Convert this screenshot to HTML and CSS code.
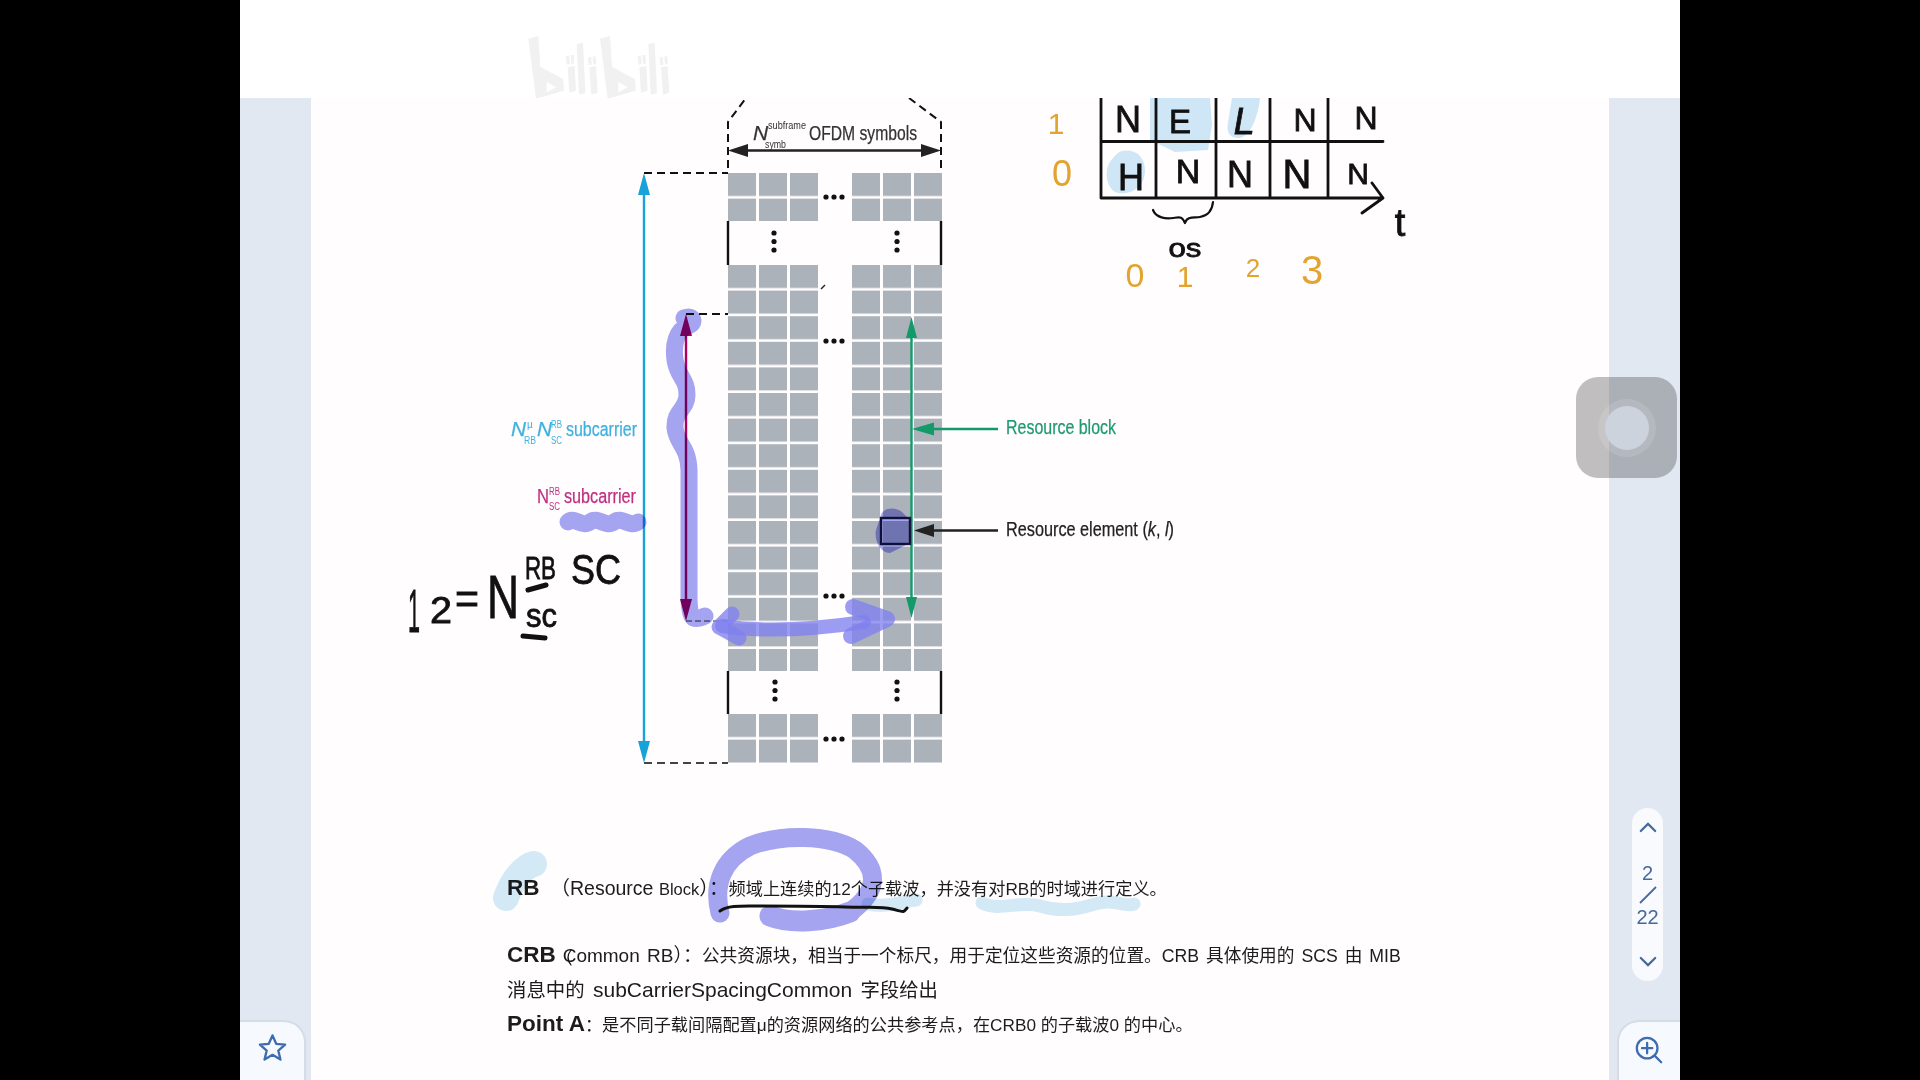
FILE: index.html
```html
<!DOCTYPE html>
<html lang="zh-CN">

<head>
  <meta charset="utf-8">
  <title>RB / CRB / Point A</title>
  <link rel="stylesheet" href="styles.css">
</head>

<body>
  <main class="app">
    <header class="topbar">
      <!-- bilibili watermark -->
      <svg class="watermark" viewBox="0 0 600 270" aria-label="bilibili">
        <g id="wm-bili">
          <path fill-rule="evenodd" d="M85 56 115 48 121 140 190 178 192 212 108 236ZM140 185 140 217 168 202Z" />
          <path d="M198 108 208 106 210 132 200 134ZM212 106 221 104 223 130 214 132ZM203 142 224 138 228 212 208 218Z" />
          <path d="M230 72 249 68 256 220 237 224Z" />
          <path d="M264 112 274 110 275 134 266 136ZM278 110 287 108 288 132 280 134ZM268 142 288 138 293 218 274 224Z" />
        </g>
        <use href="#wm-bili" x="215" />
      </svg>
    </header>

    <div class="main">
      <aside class="rail rail-left">
        <button type="button" class="corner corner-left" aria-label="收藏">
          <svg class="icon-star" viewBox="0 0 32 32">
            <path d="M16 3.5 19.8 12.2 29 13 22 19.2 24.2 28.5 16 23.6 7.8 28.5 10 19.2 3 13 12.2 12.2Z" />
          </svg>
        </button>
      </aside>

      <section class="doc">
        <svg class="figure" viewBox="311 98 1298 730">
          <defs>
            <pattern id="cell" width="31" height="25.6" patternUnits="userSpaceOnUse">
              <rect width="28" height="23" fill="#abb2b9" />
            </pattern>
          </defs>

          <!-- resource grid -->
          <g fill="url(#cell)">
            <g transform="translate(728 173)"><rect width="90" height="48" /></g>
            <g transform="translate(852 173)"><rect width="90" height="48" /></g>
            <g transform="translate(728 265)"><rect width="90" height="406" /></g>
            <g transform="translate(852 265)"><rect width="90" height="406" /></g>
            <g transform="translate(728 714)"><rect width="90" height="49" /></g>
            <g transform="translate(852 714)"><rect width="90" height="49" /></g>
          </g>

          <g class="bars">
            <path d="M728 221V265M941 221V265M728 671V714M941 671V714" />
          </g>

          <g class="dots">
            <circle cx="826" cy="197" r="2.6" /><circle cx="834" cy="197" r="2.6" /><circle cx="842" cy="197" r="2.6" />
            <circle cx="826" cy="341" r="2.6" /><circle cx="834" cy="341" r="2.6" /><circle cx="842" cy="341" r="2.6" />
            <circle cx="826" cy="596" r="2.6" /><circle cx="834" cy="596" r="2.6" /><circle cx="842" cy="596" r="2.6" />
            <circle cx="826" cy="739" r="2.6" /><circle cx="834" cy="739" r="2.6" /><circle cx="842" cy="739" r="2.6" />
            <circle cx="774" cy="233" r="2.6" /><circle cx="774" cy="241.5" r="2.6" /><circle cx="774" cy="250" r="2.6" />
            <circle cx="897" cy="233" r="2.6" /><circle cx="897" cy="241.5" r="2.6" /><circle cx="897" cy="250" r="2.6" />
            <circle cx="775" cy="682" r="2.6" /><circle cx="775" cy="690.5" r="2.6" /><circle cx="775" cy="699" r="2.6" />
            <circle cx="897" cy="682" r="2.6" /><circle cx="897" cy="690.5" r="2.6" /><circle cx="897" cy="699" r="2.6" />
          </g>

          <path class="dash" d="M644 173H728M686 314H728M728 168V122L746 98M909 98 941 122V168" />
          <path class="dash dash-grey" d="M644 763H728" />
          <path class="dash dash-thin" d="M686 621H728" />
          <path class="tick" d="M821 289 825 285" />

          <!-- arrows -->
          <g class="arrow-black">
            <path d="M745 150.5H925" />
            <path class="head" d="M728 150.5 748 144V157ZM941 150.5 921 144V157Z" />
            <path d="M930 530.5H998" />
            <path class="head" d="M914 530.5 934 524V537Z" />
          </g>
          <g class="arrow-blue">
            <path d="M644 190V748" />
            <path class="head" d="M644 173 650 195H638ZM644 763 650 741H638Z" />
          </g>
          <g class="arrow-magenta">
            <path d="M686 332V604" />
            <path class="head" d="M686 314 692 336H680ZM686 621 692 599H680Z" />
          </g>
          <g class="arrow-green">
            <path d="M911.5 335V600" />
            <path class="head" d="M911.5 317 917 338H906ZM911.5 618 917 597H906Z" />
            <path d="M930 429H998" />
            <path class="head" d="M912 429 934 422.5V435.5Z" />
          </g>
          <rect class="element" x="881" y="518" width="29" height="26" />

          <!-- labels -->
          <text class="label" x="809" y="140" textLength="108" lengthAdjust="spacingAndGlyphs">OFDM symbols</text>
          <text class="label label-n" x="753" y="140">N</text>
          <text class="label label-tiny" x="768" y="129" textLength="38" lengthAdjust="spacingAndGlyphs">subframe</text>
          <text class="label label-tiny" x="765" y="148" textLength="21" lengthAdjust="spacingAndGlyphs">symb</text>

          <g class="label-blue">
            <text class="label label-n" x="511" y="436" textLength="15" lengthAdjust="spacingAndGlyphs">N</text>
            <text class="label label-tiny" x="527" y="428">µ</text>
            <text class="label label-tiny" x="524" y="444" textLength="12" lengthAdjust="spacingAndGlyphs">RB</text>
            <text class="label label-n" x="537" y="436" textLength="15" lengthAdjust="spacingAndGlyphs">N</text>
            <text class="label label-tiny" x="551" y="428" textLength="11" lengthAdjust="spacingAndGlyphs">RB</text>
            <text class="label label-tiny" x="551" y="444" textLength="11" lengthAdjust="spacingAndGlyphs">SC</text>
            <text class="label" x="566" y="436" textLength="71" lengthAdjust="spacingAndGlyphs">subcarrier</text>
          </g>
          <g class="label-magenta">
            <text class="label" x="537" y="503" textLength="12" lengthAdjust="spacingAndGlyphs">N</text>
            <text class="label label-tiny" x="549" y="495" textLength="11" lengthAdjust="spacingAndGlyphs">RB</text>
            <text class="label label-tiny" x="549" y="510" textLength="11" lengthAdjust="spacingAndGlyphs">SC</text>
            <text class="label" x="564" y="503" textLength="72" lengthAdjust="spacingAndGlyphs">subcarrier</text>
          </g>
          <text class="label label-green" x="1006" y="434" textLength="110" lengthAdjust="spacingAndGlyphs">Resource block</text>
          <text class="label label-plain" x="1006" y="536" textLength="168" lengthAdjust="spacingAndGlyphs">Resource element (<tspan font-style="italic">k</tspan>, <tspan font-style="italic">l</tspan>)</text>

          <!-- handwritten formula -->
          <g class="hand">
            <text x="408" y="632" font-size="62" textLength="12" lengthAdjust="spacingAndGlyphs">1</text>
            <text x="430" y="623" font-size="36" textLength="22" lengthAdjust="spacingAndGlyphs">2</text>
            <text x="455" y="613" font-size="42" textLength="24" lengthAdjust="spacingAndGlyphs">=</text>
            <text x="487" y="618" font-size="62" textLength="32" lengthAdjust="spacingAndGlyphs">N</text>
            <text x="525" y="579" font-size="32" textLength="31" lengthAdjust="spacingAndGlyphs">RB</text>
            <text x="571" y="584" font-size="42" textLength="50" lengthAdjust="spacingAndGlyphs">SC</text>
            <text x="526" y="627" font-size="34" textLength="31" lengthAdjust="spacingAndGlyphs">sc</text>
          </g>
          <path class="pen-thick" d="M528 590 546 585M523 636 545 638" />

          <!-- handwritten table -->
          <path class="soft-blue" d="M1150 98H1210L1212 125 1208 150 1175 152 1150 140ZM1232 98H1260C1258 118 1250 136 1240 138 1230 138 1226 134 1228 122ZM1122 151C1136 148 1146 158 1145 172 1144 188 1130 195 1118 193 1106 190 1104 170 1110 162 1114 156 1118 152 1122 151Z" />
          <path class="pen" d="M1101 98V198M1156 98V198M1216 98V198M1270 98V198M1328 98V198M1101 141.5H1383M1101 198H1383M1372 183 1383 198 1362 213" />
          <path class="pen-thin" d="M1153 210C1156 218 1166 219 1173 218S1182 216 1185 223C1187 216 1194 218 1200 217S1212 212 1213 202" />
          <g class="hand hand-table">
            <text x="1128" y="132">N</text>
            <text x="1180" y="133" font-size="33">E</text>
            <text x="1242" y="134" font-size="38" transform="skewX(-10) translate(24 0)">L</text>
            <text x="1305" y="131" font-size="32">N</text>
            <text x="1366" y="129" font-size="32">N</text>
            <text x="1131" y="190">H</text>
            <text x="1188" y="183" font-size="34">N</text>
            <text x="1240" y="187">N</text>
            <text x="1297" y="188" font-size="40">N</text>
            <text x="1358" y="184" font-size="30">N</text>
            <text x="1400" y="236" font-size="38">t</text>
            <text x="1185" y="257" font-size="26" textLength="33" lengthAdjust="spacingAndGlyphs">os</text>
          </g>
          <g class="hand-orange">
            <text x="1056" y="134" font-size="30">1</text>
            <text x="1062" y="186" font-size="36">0</text>
            <text x="1135" y="287" font-size="34">0</text>
            <text x="1185" y="287" font-size="30">1</text>
            <text x="1253" y="277" font-size="26">2</text>
            <text x="1312" y="284" font-size="40">3</text>
          </g>
        </svg>

        <div class="notes">
          <p class="note-rb"><b>RB</b><span class="en">（Resource <small>Block</small>）：</span>频域上连续的12个子载波，并没有对RB的时域进行定义。</p>
          <p class="note-crb"><b>CRB</b> <span class="en-crb">Common RB）：</span>公共资源块，相当于一个标尺，用于定位这些资源的位置。CRB 具体使用的 SCS 由 MIB</p>
          <p class="note-msg">消息中的 <span class="en-msg">subCarrierSpacingCommon</span> 字段给出</p>
          <p class="note-point"><b>Point A</b>：是不同子载间隔配置μ的资源网络的公共参考点，在CRB0 的子载波0 的中心。</p>
        </div>

        <!-- pen marks lying over the figure and the notes -->
        <svg class="ink" viewBox="311 98 1298 982">
          <g class="hl-blue">
            <path d="M506 898C512 880 524 866 534 864" stroke-width="26" />
            <path d="M868 904C885 908 900 902 916 900M982 903C1000 912 1020 900 1040 906S1075 910 1095 904 1125 908 1134 904" stroke-width="13" />
          </g>
          <g class="hl-purple">
            <path d="M684 318C694 314 696 324 688 326 676 330 673 345 675 360 678 378 687 378 687 395 687 410 674 410 675 428 677 445 688 445 689 470V600C690 618 692 622 705 616" stroke-width="17" />
            <path d="M568 522C574 516 582 528 590 522 598 516 606 528 614 522 622 516 630 528 638 522" stroke-width="17" />
            <path d="M881 515C884 507 896 507 902 512L910 520V543L890 553C880 553 874 540 876 530Z" class="hl-fill" />
            <path d="M720 913C713 885 722 860 750 846 780 834 830 834 855 850 880 870 878 892 850 912" stroke-width="19" />
            <path d="M770 916C790 924 825 922 850 912" stroke-width="21" />
          </g>
          <g class="hl-arrow">
            <path d="M722 626C760 632 810 630 864 622" stroke-width="14" />
            <path d="M732 614 719 627 739 638" stroke-width="15" />
            <path d="M853 607 887 619 851 636" stroke-width="16" />
          </g>
          <path class="ink-line" d="M720 911C728 905 742 906 760 906S820 906 845 907 880 906 892 909 903 913 907 908" />
          <path class="ink-cursor" d="M571 950C567 955 567 960 571 965" />
        </svg>
      </section>

      <aside class="rail rail-right">
        <nav class="pager" aria-label="页码">
          <svg class="chevron" viewBox="0 0 20 12"><path d="M2 10 10 2 18 10" /></svg>
          <div class="pager-num">
            <span>2</span>
            <svg class="slash" viewBox="0 0 20 20"><path d="M2 18 18 2" /></svg>
            <span>22</span>
          </div>
          <svg class="chevron" viewBox="0 0 20 12"><path d="M2 2 10 10 18 2" /></svg>
        </nav>
        <button type="button" class="corner corner-right" aria-label="放大">
          <svg class="icon-zoom" viewBox="0 0 32 32">
            <circle cx="14" cy="14" r="11" />
            <path d="M8.5 14H19.5M14 8.5V19.5M22 22 29 29" />
          </svg>
        </button>
      </aside>
    </div>

    <div class="float-ball"><span></span></div>
  </main>
</body>

</html>
```

FILE: styles.css
```css
* {
  box-sizing: border-box;
}

html,
body {
  margin: 0;
  height: 100%;
}

body {
  display: flex;
  justify-content: center;
  overflow: hidden;
  background-color: #000;
  font-family: "Liberation Sans", "Noto Sans CJK SC", sans-serif;
  color: #1c1c1c;
}

.app {
  position: relative;
  display: flex;
  flex-flow: column;
  inline-size: 1440px;
  block-size: 1080px;
  background-color: #fff;
  filter: blur(0.45px);
}

.topbar {
  position: relative;
  flex: none;
  block-size: 98px;
}

.watermark {
  position: absolute;
  top: 20px;
  left: 260px;
  inline-size: 200px;
  block-size: 90px;
  fill: #f1f1f1;
}

.main {
  display: flex;
  flex: 1;
  min-block-size: 0;
}

.rail {
  position: relative;
  display: flex;
  flex-flow: column;
  flex: none;
  justify-content: flex-end;
  background-color: #e1e8f2;
}

.rail-left {
  inline-size: 71px;
  align-items: flex-start;
}

.rail-right {
  inline-size: 71px;
  align-items: flex-end;
  gap: 39px;
}

.corner {
  display: flex;
  justify-content: center;
  align-items: center;
  block-size: 60px;
  border: 0;
  padding: 0;
  background-color: #f6f9fd;
}

.corner-left {
  inline-size: 66px;
  border-block-start: 2px solid #d5dce6;
  border-inline-end: 2px solid #d5dce6;
  border-start-end-radius: 22px;
  padding-block-end: 8px;
}

.corner-right {
  inline-size: 63px;
  border-block-start: 2px solid #d5dce6;
  border-inline-start: 2px solid #d5dce6;
  border-start-start-radius: 22px;
  padding-block-end: 3px;
  padding-inline-end: 2px;
}

.icon-star {
  inline-size: 31px;
  block-size: 31px;
  fill: none;
  stroke: #3e6cae;
  stroke-width: 2.4;
  stroke-linejoin: round;
}

.icon-zoom {
  inline-size: 30px;
  block-size: 30px;
  fill: none;
  stroke: #3e6cae;
  stroke-width: 2.4;
  stroke-linecap: round;
}

.pager {
  display: flex;
  flex-flow: column;
  justify-content: space-between;
  align-items: center;
  inline-size: 31px;
  block-size: 173px;
  margin-inline-end: 17px;
  border-radius: 16px;
  padding-block: 14px;
  background-color: #f8fafd;
  color: #46689c;
}

.chevron {
  inline-size: 18px;
  block-size: 11px;
  fill: none;
  stroke: currentColor;
  stroke-width: 2.4;
  stroke-linecap: round;
}

.pager-num {
  display: flex;
  flex-flow: column;
  align-items: center;
  font-size: 20px;
  line-height: 20px;
}

.slash {
  inline-size: 20px;
  block-size: 20px;
  margin-block: 2px;
  fill: none;
  stroke: currentColor;
  stroke-width: 1.8;
}

.doc {
  position: relative;
  display: flex;
  flex-flow: column;
  flex: 1;
  min-inline-size: 0;
  background-color: #fffdfe;
}

.figure {
  flex: none;
  inline-size: 1298px;
  block-size: 730px;
}

.notes {
  padding-inline-start: 196px;

  p {
    block-size: 34px;
    margin: 0;
    line-height: 34px;
    white-space: nowrap;
  }

  b {
    font-size: 22.5px;
  }
}

.notes .note-rb {
  margin-block-start: 43px;
  font-size: 17.2px;

  .en {
    margin-inline-start: 11px;
    font-size: 19.5px;
  }

  small {
    font-size: 16.5px;
  }
}

.notes .note-crb {
  margin-block-start: 33px;
  font-size: 17.7px;
  word-spacing: 2px;

  .en-crb {
    font-size: 19px;
  }
}

.notes .note-msg {
  margin-block-start: 1px;
  font-size: 19.4px;
  word-spacing: 3px;

  .en-msg {
    font-size: 21px;
  }
}

.notes .note-point {
  font-size: 17.2px;
}

.ink {
  position: absolute;
  inset: 0;
  inline-size: 1298px;
  block-size: 982px;
  pointer-events: none;
  fill: none;
  stroke-linecap: round;
  stroke-linejoin: round;
}

.hl-blue {
  mix-blend-mode: multiply;
  stroke: #d3ebf7;
}

.hl-purple {
  mix-blend-mode: multiply;
  stroke: #a5a5f1;
}

.hl-fill {
  fill: #a5a5f1;
  stroke: none;
}

.hl-arrow {
  stroke: #8080f0;
  stroke-opacity: 0.78;
}

.ink-line {
  stroke: #111;
  stroke-width: 3;
}

.ink-cursor {
  stroke: #111;
  stroke-width: 1.2;
}

.bars path {
  fill: none;
  stroke: #111;
  stroke-width: 2.4;
}

.dots {
  fill: #111;
}

.dash {
  fill: none;
  stroke: #111;
  stroke-width: 2;
  stroke-dasharray: 8 5;
}

.dash-grey {
  stroke: #444;
}

.dash-thin {
  stroke: #333;
  stroke-width: 1;
  stroke-dasharray: 6 3;
}

.tick {
  fill: none;
  stroke: #222;
  stroke-width: 1.4;
}

.arrow-black path,
.arrow-blue path,
.arrow-magenta path,
.arrow-green path {
  fill: none;
  stroke-width: 2.4;
}

.arrow-black path {
  stroke: #222;
}

.arrow-blue path {
  stroke: #17a2d8;
}

.arrow-magenta path {
  stroke: #b00062;
}

.arrow-green path {
  stroke: #129a69;
}

.arrow-black .head,
.arrow-blue .head,
.arrow-magenta .head,
.arrow-green .head {
  stroke: none;
}

.arrow-black .head {
  fill: #222;
}

.arrow-blue .head {
  fill: #17a2d8;
}

.arrow-magenta .head {
  fill: #b00062;
}

.arrow-green .head {
  fill: #129a69;
}

.element {
  fill: none;
  stroke: #15193a;
  stroke-width: 2.4;
}

.label {
  font-size: 20px;
  fill: #333;
  stroke: #333;
  stroke-width: 0.25;
}

.label-n {
  font-style: italic;
  font-size: 21px;
}

.label-tiny {
  font-size: 10px;
  stroke-width: 0;
}

.label-blue .label {
  fill: #3fb1de;
  stroke: #3fb1de;
}

.label-magenta .label {
  fill: #c02f80;
  stroke: #c02f80;
}

.label-green {
  fill: #1f9a6f;
  stroke: #1f9a6f;
}

.label-plain {
  fill: #222;
  stroke: #222;
}

.hand text {
  fill: #111;
  stroke: #111;
  stroke-width: 0.8;
}

.hand-table {
  font-size: 36px;
}

.hand-table text {
  text-anchor: middle;
}

.hand-orange text {
  fill: #e2a42e;
  text-anchor: middle;
}

.pen,
.pen-thin,
.pen-thick {
  fill: none;
  stroke: #111;
  stroke-linecap: round;
  stroke-linejoin: round;
}

.pen {
  stroke-width: 2.8;
}

.pen-thin {
  stroke-width: 2.2;
}

.pen-thick {
  stroke-width: 5;
}

.soft-blue {
  fill: #cfe6f6;
}

.float-ball {
  position: absolute;
  top: 377px;
  left: 1336px;
  display: flex;
  justify-content: center;
  align-items: center;
  inline-size: 101px;
  block-size: 101px;
  border-radius: 22px;
  background-color: rgba(60, 60, 60, 0.32);

  span {
    inline-size: 44px;
    block-size: 44px;
    border-radius: 50%;
    background-color: #cdd3dc;
    box-shadow: 0 0 0 7px rgba(255, 255, 255, 0.12);
  }
}
```
